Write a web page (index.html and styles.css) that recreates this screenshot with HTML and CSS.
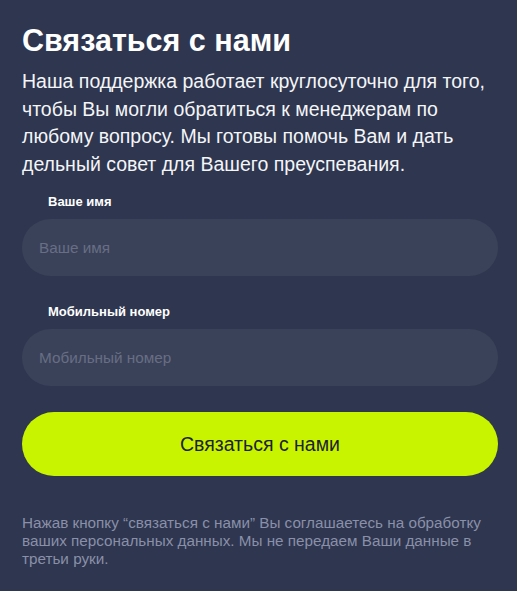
FILE: index.html
```html
<!DOCTYPE html>
<html lang="ru">
<head>
<meta charset="utf-8">
<link rel="stylesheet" href="styles.css">
</head>
<body>
<main class="contact">
  <h1 class="title">Связаться с нами</h1>
  <p class="intro">Наша поддержка работает круглосуточно для того, чтобы Вы могли обратиться к менеджерам по любому вопросу. Мы готовы помочь Вам и дать дельный совет для Вашего преуспевания.</p>
  <form class="form">
    <label class="field">
      <span class="label">Ваше имя</span>
      <input class="input" type="text" placeholder="Ваше имя">
    </label>
    <label class="field">
      <span class="label">Мобильный номер</span>
      <input class="input" type="tel" placeholder="Мобильный номер">
    </label>
    <button class="submit" type="button">Связаться с нами</button>
  </form>
  <p class="note">Нажав кнопку “связаться с нами” Вы соглашаетесь на обработку ваших персональных данных. Мы не передаем Ваши данные в третьи руки.</p>
</main>
</body>
</html>
```
FILE: styles.css
```css
html, body {
  margin: 0;
  padding: 0;
  background: #2e3650;
}
body {
  font-family: "Liberation Sans", Arial, sans-serif;
  color: #ffffff;
  width: 517px;
  height: 591px;
  overflow: hidden;
}
.contact {
  padding: 22px 19px 0 22px;
}
.title {
  margin: 0;
  font-size: 30.5px;
  line-height: 36px;
  font-weight: bold;
  color: #ffffff;
}
.intro {
  margin: 10px 0 0;
  font-size: 19.5px;
  line-height: 27.6px;
  color: #f4f5f7;
}
.form {
  margin-top: 16px;
  display: flex;
  flex-direction: column;
}
.field {
  display: flex;
  flex-direction: column;
  margin-bottom: 28px;
}
.field + .field {
  margin-bottom: 26px;
}
.label {
  font-size: 13px;
  line-height: 15px;
  font-weight: bold;
  color: #ffffff;
  padding-left: 26px;
  margin-bottom: 10px;
}
.input {
  box-sizing: border-box;
  height: 57px;
  width: 476px;
  border: none;
  outline: none;
  border-radius: 29px;
  background: #3a4259;
  padding: 0 17px;
  font-family: "Liberation Sans", Arial, sans-serif;
  font-size: 15.3px;
  color: #ffffff;
}
.input::placeholder {
  color: #686e84;
}
.submit {
  height: 64px;
  width: 476px;
  border: none;
  border-radius: 32px;
  background: #c8f400;
  font-family: "Liberation Sans", Arial, sans-serif;
  font-size: 19.5px;
  color: #1d2230;
  cursor: pointer;
}
.note {
  margin: 38px 0 0;
  font-size: 15.25px;
  line-height: 18px;
  color: #8a90a8;
}
```
